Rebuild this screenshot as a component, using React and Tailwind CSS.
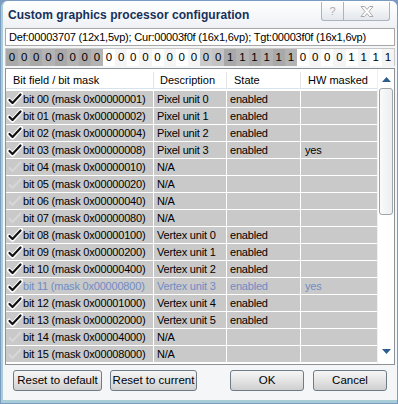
import React from "react";

const bits = "00000000000000000011111100001111".split("");

const bitCellClass = (i) => {
  const group = Math.floor(i / 8);
  const odd = i % 2 === 1;
  if (group === 0) return odd ? "bg-[#b3b3b3]" : "bg-[#a9a9a9]";
  if (group === 2) {
    if (i < 18) return odd ? "bg-[#c4c4c4]" : "bg-[#cacaca]";
    return odd ? "bg-[#b3b3b3]" : "bg-[#a9a9a9]";
  }
  return odd ? "bg-[#f4f4f4]" : "bg-white";
};

const rows = Array.from({ length: 16 }, (_, i) => {
  let desc = "N/A";
  if (i < 4) desc = "Pixel unit " + i;
  if (i >= 8 && i < 14) desc = "Vertex unit " + (i - 8);
  const on = i < 4 || (i >= 8 && i < 14);
  return {
    bit: String(i).padStart(2, "0"),
    mask: (1 << i).toString(16).padStart(8, "0"),
    desc,
    on,
    state: on ? "enabled" : "",
    hw: i === 3 || i === 11 ? "yes" : "",
    dim: i === 11,
  };
});

const Check = ({ on }) => (
  <svg width="16" height="14" viewBox="0 0 16 14" className="shrink-0">
    {on ? (
      <>
        <path d="M2 8 L5.5 11.5 L14 2" fill="none" stroke="#fff" strokeWidth="4.5" strokeLinecap="round" strokeLinejoin="round" />
        <path d="M2.5 8 L5.5 11 L13.5 2.5" fill="none" stroke="#111" strokeWidth="2.2" strokeLinecap="round" strokeLinejoin="round" />
      </>
    ) : (
      <path d="M2.5 8 L5.5 11 L13.5 2.5" fill="none" stroke="#d6d6d6" strokeWidth="2.2" strokeLinecap="round" strokeLinejoin="round" />
    )}
  </svg>
);

const Button = ({ children, w }) => (
  <button
    className={`${w} h-[21px] rounded-[3px] border border-[#707b88] bg-gradient-to-b from-[#f6f6f6] via-[#e4e4e4] to-[#cfcfcf] text-[11.5px] leading-none text-black`}
  >
    {children}
  </button>
);

const App = () => {
  return (
    <div className="w-[398px] h-[404px] bg-[#7b9cc0] p-[1px] font-['Liberation_Sans',Arial,sans-serif]">
      <div className="w-full h-full flex flex-col bg-[#f5f6f7] rounded-t-[6px] border-l-2 border-b-[3px] border-[#a9cdd6]">
        {/* title bar */}
        <div className="h-[27px] flex items-center justify-between pl-[5px] pr-[7px] bg-gradient-to-b from-white to-[#eef1f4] rounded-t-[6px]">
          <span className="text-[12px] font-bold text-[#16305a] tracking-[0.05px]">
            Custom graphics processor configuration
          </span>
          <div className="flex -mt-[6px] h-[19px] rounded-b-[3px] border border-t-0 border-[#aab3bf] bg-gradient-to-b from-white to-[#e3e7ec]">
            <div className="w-[22px] flex items-center justify-center border-r border-[#aab3bf] text-[11px] text-[#b0b0b0]">?</div>
            <div className="w-[45px] flex items-center justify-center">
              <svg width="14" height="11" viewBox="0 0 14 11">
                <path d="M1 0.5 L4.5 0.5 L7 3.5 L9.5 0.5 L13 0.5 L9 5.5 L13 10.5 L9.5 10.5 L7 7.5 L4.5 10.5 L1 10.5 L5 5.5 Z" fill="#fff" stroke="#a8a8a8" strokeWidth="1" />
              </svg>
            </div>
          </div>
        </div>

        <div className="flex flex-col px-[2px]">
          {/* def line */}
          <div className="h-[18px] flex items-center px-[3px] bg-white border border-[#a7a7a7] text-[11px] tracking-[-0.2px] text-black">
            Def:00003707 (12x1,5vp); Cur:00003f0f (16x1,6vp); Tgt:00003f0f (16x1,6vp)
          </div>

          {/* bits */}
          <div className="mt-[2px] h-[18px] grid grid-cols-[repeat(32,minmax(0,1fr))] border border-[#c8c8c8]">
            {bits.map((b, i) => (
              <div key={i} className={`${bitCellClass(i)} flex items-center justify-center text-[11.5px] text-black`}>
                {b}
              </div>
            ))}
          </div>

          {/* table */}
          <div className="mt-[2px] h-[297px] flex border border-[#8f9294] bg-white">
            <div className="w-[371px] flex flex-col">
              <div className="h-[20px] pt-[3px] grid grid-cols-[148px_73px_74px_1fr] border-b border-[#d7e4f0] text-[11px] text-black">
                <div className="flex items-center pl-[7px] border-r border-[#e3e3e3]">Bit field / bit mask</div>
                <div className="flex items-center pl-[6px] border-r border-[#e3e3e3]">Description</div>
                <div className="flex items-center pl-[7px] border-r border-[#e3e3e3]">State</div>
                <div className="flex items-center pl-[7px]">HW masked</div>
              </div>
              <div className="pt-[2px] flex flex-col">
                {rows.map((r) => (
                  <div
                    key={r.bit}
                    className={`h-[17px] grid grid-cols-[148px_73px_74px_1fr] border-b border-white bg-[#c9c9c9] text-[11px] tracking-[-0.2px] ${r.dim ? "text-[#6f8cc4]" : "text-black"}`}
                  >
                    <div className="flex items-center pl-[1px] border-r border-white whitespace-nowrap">
                      <Check on={r.on} />
                      <span>bit {r.bit} (mask 0x{r.mask})</span>
                    </div>
                    <div className="flex items-center pl-[3px] border-r border-white whitespace-nowrap">{r.desc}</div>
                    <div className="flex items-center pl-[3px] border-r border-white">{r.state}</div>
                    <div className="flex items-center pl-[4px]">{r.hw}</div>
                  </div>
                ))}
              </div>
            </div>

            {/* scrollbar */}
            <div className="flex-1 flex flex-col items-center border-l border-[#f0f0f0] bg-white">
              <svg width="9" height="5" viewBox="0 0 9 5" className="mt-[8px]">
                <path d="M0 5 L4.5 0 L9 5 Z" fill="#2f5c8f" />
              </svg>
              <div className="mt-[6px] w-[14px] h-[127px] rounded-[3px] border border-[#9ea4aa] bg-gradient-to-r from-[#fafafa] to-[#eceef0]" />
              <div className="flex-1" />
              <svg width="9" height="5" viewBox="0 0 9 5" className="mb-[10px]">
                <path d="M0 0 L9 0 L4.5 5 Z" fill="#2f5c8f" />
              </svg>
            </div>
          </div>

          {/* buttons */}
          <div className="mt-[5px] flex items-center pl-[8px]">
            <Button w="w-[89px]">Reset to default</Button>
            <div className="w-[8px]" />
            <Button w="w-[87px]">Reset to current</Button>
            <div className="w-[33px]" />
            <Button w="w-[74px]">OK</Button>
            <div className="w-[9px]" />
            <Button w="w-[74px]">Cancel</Button>
          </div>
        </div>
      </div>
    </div>
  );
};

export default App;
